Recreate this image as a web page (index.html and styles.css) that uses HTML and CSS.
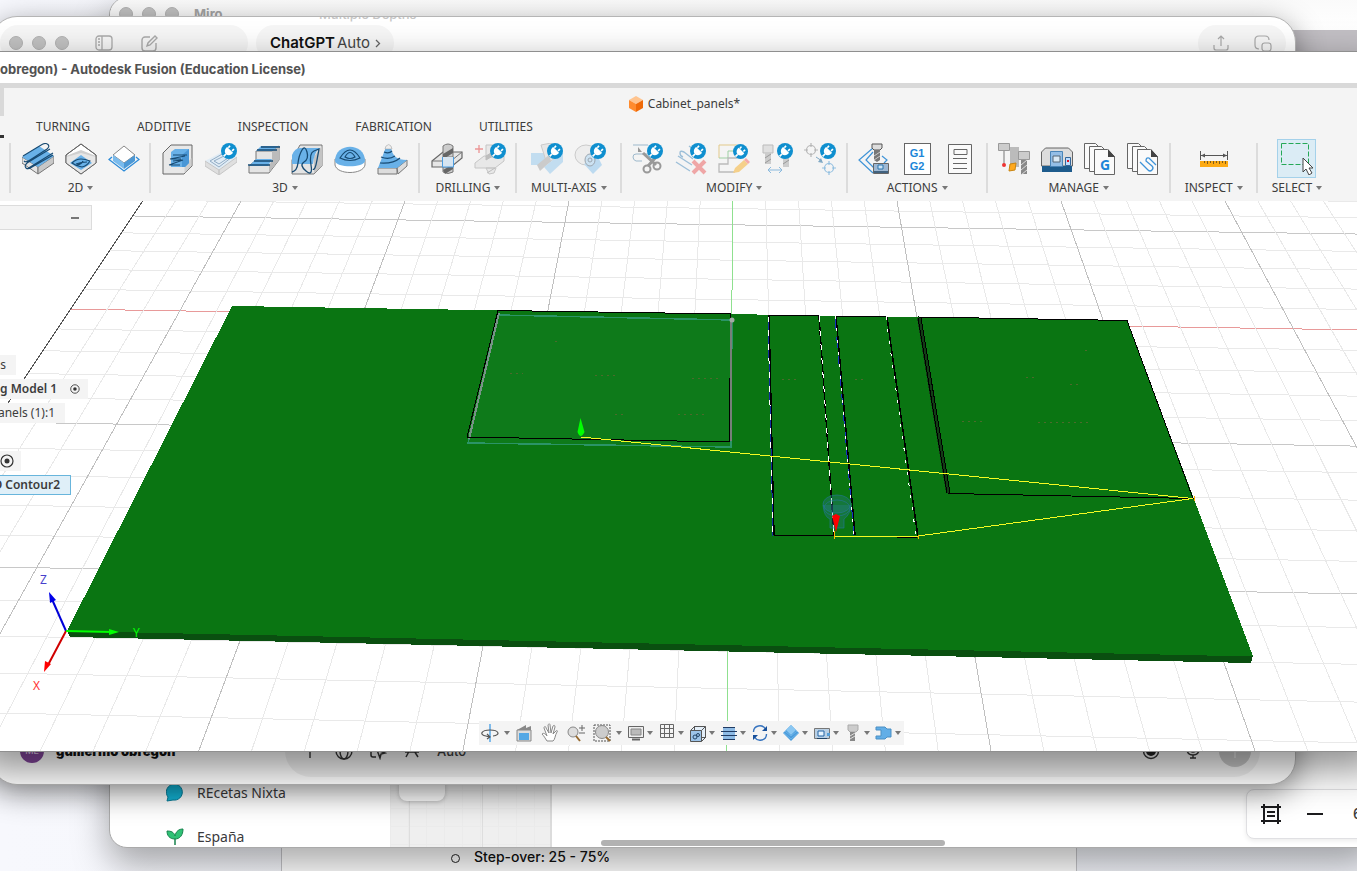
FILE: index.html
```html
<!DOCTYPE html>
<html lang="en">
<head>
<meta charset="utf-8">
<title>Autodesk Fusion</title>
<link rel="stylesheet" href="styles.css">
</head>
<body>
<svg class="defs" aria-hidden="true">
  <symbol id="plug" viewBox="0 0 16 16"><circle cx="8" cy="8" r="8" fill="#0f8fcf"/><path d="M2.600 13.400L5 11M9 2.800l-1.600 2M13 6.200l-2 1.600" stroke="#fff" stroke-width="1.700"/><path d="M6.200 4l5.800 5.800c-1.400 2.300-4.500 3.600-7 1.400C2.800 8.800 4 5.400 6.200 4z" fill="#fff"/></symbol>
  <symbol id="target" viewBox="0 0 14 14"><circle cx="7" cy="7" r="6" fill="none" stroke="#333" stroke-width="1.200"/><circle cx="7" cy="7" r="2.500" fill="#333"/></symbol>
</svg>

<main class="desktop">
  <article class="doc">
    <ul><li>Step-over: 25 - 75%</li></ul>
  </article>

  <section class="window miro" aria-label="Miro">
    <header class="miro-bar"><i class="dot"></i><i class="dot"></i><i class="dot"></i><b>Miro</b></header>
    <div class="miro-strip"></div>
    <div class="miro-body">
      <nav class="miro-side">
        <a href="#"><svg width="18" height="18" viewBox="0 0 18 18"><path d="M1 17l1-4a8 8 0 1 1 5 3z" fill="#13b6d8" stroke="#087f9b"/></svg>REcetas Nixta</a>
        <a href="#"><svg width="18" height="18" viewBox="0 0 18 18"><path d="M9 17v-7" stroke="#17824d" stroke-width="1.500"/><path d="M9 11C3 11 1 7 1 3c4 0 7 1 8 5 1-5 4-7 8-7 0 6-3 10-8 10z" fill="#2fc175" stroke="#17824d"/></svg>España</a>
      </nav>
      <div class="miro-board"><i></i></div>
      <div class="miro-page"><i class="scroll"></i></div>
    </div>
    <div class="zoom-panel">
      <button aria-label="Frames"><svg width="20" height="20" viewBox="0 0 20 20"><path d="M0 3h20M0 17h20M3 0v20M17 0v20M6 8h8M6 12h8" stroke="#1c1c1e" stroke-width="2" fill="none"/></svg></button>
      <button aria-label="Zoom out"><svg width="16" height="20" viewBox="0 0 16 20"><path d="M0 10h16" stroke="#1c1c1e" stroke-width="2"/></svg></button>
      <span>6</span>
    </div>
  </section>

  <section class="window chat" aria-label="ChatGPT">
    <p class="chat-under">Multiple Depths</p>
    <header class="chat-head">
      <div class="pill pill-left"><i class="dot"></i><i class="dot"></i><i class="dot"></i>
        <button aria-label="Sidebar"><svg width="18" height="16" viewBox="0 0 18 16" fill="none" stroke="#aaa" stroke-width="1.300"><rect x="1" y="1" width="16" height="14" rx="3"/><path d="M7 1v14M3 4h2M3 7h2M3 10h2"/></svg></button>
        <button aria-label="New chat"><svg width="18" height="17" viewBox="0 0 18 17" fill="none" stroke="#aaa" stroke-width="1.400"><path d="M9 2H4a3 3 0 0 0-3 3v8a3 3 0 0 0 3 3h8a3 3 0 0 0 3-3V8M6 11l1-3 7-7 2 2-7 7z"/></svg></button>
      </div>
      <button class="pill model"><b>ChatGPT</b><span>Auto</span><svg width="6" height="9" viewBox="0 0 6 9"><path d="M1 1l3.500 3.500L1 8" fill="none" stroke="#666" stroke-width="1.300"/></svg></button>
      <div class="pill pill-right">
        <button aria-label="Share"><svg width="16" height="16" viewBox="0 0 16 16" fill="none" stroke="#aaa" stroke-width="1.200"><path d="M8 11V1M5 4l3-3 3 3M1 10v3q0 2 2 2h10q2 0 2-2v-3"/></svg></button>
        <button aria-label="Pop out"><svg width="18" height="17" viewBox="0 0 18 17" fill="none" stroke="#aaa" stroke-width="1.200"><path d="M5 14Q1 14 1 10V5q0-4 4-4h6q4 0 4 4"/><rect x="8" y="8" width="9" height="8" rx="2.500"/></svg></button>
      </div>
    </header>
    <footer class="chat-foot">
      <div class="user"><span class="avatar">ME</span><b>guillermo obregon</b></div>
      <div class="composer">
        <button aria-label="Add"><svg width="18" height="18" viewBox="0 0 18 18"><path d="M9 2v14M2 9h14" stroke="#333" stroke-width="1.400"/></svg></button>
        <button aria-label="Web"><svg width="18" height="18" viewBox="0 0 18 18" fill="none" stroke="#333" stroke-width="1.400"><circle cx="9" cy="9" r="8"/><ellipse cx="9" cy="9" rx="4" ry="8"/><path d="M1 9h16"/></svg></button>
        <button aria-label="Agent"><svg width="18" height="18" viewBox="0 0 18 18" fill="none" stroke="#333" stroke-width="1.500"><path d="M7 15H4q-2 0-2-2V4q0-2 2-2h8q2 0 2 2v2M8 8l8 3-4 1-1 4z"/></svg></button>
        <button aria-label="Apps"><svg width="18" height="18" viewBox="0 0 18 18" fill="none" stroke="#333" stroke-width="1.500"><path d="M2 10h14M10 2L3 15M8 4l7 11"/></svg></button>
        <span>Auto</span>
        <i class="grow"></i>
        <button aria-label="Record"><svg width="18" height="18" viewBox="0 0 18 18"><circle cx="9" cy="9" r="7.500" fill="none" stroke="#333" stroke-width="1.500"/><circle cx="9" cy="9" r="5" fill="#222"/></svg></button>
        <button aria-label="Dictate"><svg width="18" height="18" viewBox="0 0 18 18" fill="none" stroke="#333" stroke-width="1.400"><rect x="6.500" y="0" width="5" height="10" rx="2.500"/><path d="M3 7q0 6 6 6t6-6M9 13v3M6 16h6"/></svg></button>
        <button class="send" aria-label="Send"><svg width="14" height="14" viewBox="0 0 14 14"><path d="M7 1v13M2 6l5-5 5 5" fill="none" stroke="#ddd" stroke-width="1.500"/></svg></button>
      </div>
    </footer>
  </section>

  <section class="fusion" aria-label="Autodesk Fusion">
    <h1 class="titlebar">obregon) - Autodesk Fusion (Education License)</h1>
    <header class="ribbon">
      <div class="doc-tab"><svg width="14" height="16" viewBox="0 0 14 16"><path d="M7 0l7 4-7 4-7-4z" fill="#ffc48f"/><path d="M0 4l7 4v8l-7-4z" fill="#ff8b2e"/><path d="M14 4L7 8v8l7-4z" fill="#f06a08"/></svg>Cabinet_panels*</div>
      <nav class="tabs"><button>TURNING</button><button>ADDITIVE</button><button>INSPECTION</button><button>FABRICATION</button><button>UTILITIES</button></nav>
      <div class="tools">
        <div class="group"><div class="icons">
          <button aria-label="2D Adaptive Clearing"><svg viewBox="0 0 32 32"><path d="M0 14l16 10v7L0 20z" fill="#e4e4e4" stroke="#777"/><path d="M32 13L16 24v7l16-11z" fill="#c8c8c8" stroke="#777"/><path d="M0 14L17 3l15 10-16 11z" fill="#69b1e8"/><path d="M1 13L20 1.500q4-2 6 0t-1 4.500L8 17q-4 3-6 1M5 20L28 6M5 26L31 10M5 20q-3 3-1 5t6-1L31 12" fill="none" stroke="#174a72" stroke-width="1.100"/></svg></button>
          <button aria-label="2D Pocket"><svg viewBox="0 0 32 32"><path d="M16 1l15 11v8L16 31 1 20v-8z" fill="#fff" stroke="#666"/><path d="M1 13l15-6 15 6v7L16 31 1 20z" fill="#cfcfcf"/><path d="M1 14l15-4 15 4v6L16 31 1 20z" fill="#e6e6e6"/><path d="M5 20l11-8 11 8-11 7z" fill="#69b1e8"/><path d="M7 20q4-4 9-4 4 0 9 2-3 5-8 6-6-1-10-4zm4 1q5-2 11-2M12 22q5-1 6-4" fill="none" stroke="#174a72" stroke-width="1.100"/><path d="M16 1l15 11v8L16 31 1 20v-8z" fill="none" stroke="#666"/></svg></button>
          <button aria-label="2D Contour"><svg viewBox="0 0 32 32"><path d="M4 14l-3 2.500L16 28l15-11.500-3-2.500" fill="none" stroke="#2d8bd8" stroke-width="1.300"/><path d="M16 3l11 9-11 8-11-8z" fill="#fff" stroke="#888"/><path d="M5 12l11 8v6L5 18z" fill="#7abbed"/><path d="M27 12l-11 8v6l11-8z" fill="#4c98d5"/></svg></button>
        </div><button class="label">2D</button></div>
        <div class="group"><div class="icons">
          <button aria-label="Adaptive"><svg viewBox="0 0 32 32"><path d="M1 10l8-8h21v21l-8 8H1z" fill="#e8e8e8" stroke="#666"/><path d="M22.500 30.500V23l7-8v8z" fill="#cfcfcf"/><path d="M9 9l4-3h14v14l-4 4H9z" fill="#69b1e8"/><path d="M20 12l7-6v14l-4 4h-3z" fill="#4a97d6"/><path d="M11 12h14M8 16l15-3M9 16h10M11 18l9-1M7 22l14-5M7 22h11" fill="none" stroke="#174a72" stroke-width="1.200"/></svg></button>
          <button aria-label="Pocket clearing"><svg viewBox="0 0 32 32"><g opacity=".5"><path d="M0 18l19-10 13 6-18 13z" fill="#cfe6f7"/><path d="M0 18l14 9v5L0 23zM14 27l18-13v5L14 32z" fill="#ccc" stroke="#999"/><path d="M5 18l14-8 8 4-13 10zM9 18l10-5 4 2-9 6z" fill="none" stroke="#369"/></g><use href="#plug" x="16" y="0" width="16" height="16"/></svg></button>
          <button aria-label="Horizontal"><svg viewBox="0 0 32 32"><path d="M8 8h16l7-5v14L21 30H1v-7l7-6z" fill="#e4e4e4" stroke="#777"/><path d="M21 29.500V23l3-6V8l7-5v14z" fill="#bbb"/><path d="M8 8l5-5h18l-7 5zM1 23l7-7h16l-4 7z" fill="#69b1e8"/><path d="M13 4h19M9 7h20M6 18h19M0 22h22" stroke="#174a72" stroke-width="1.300"/></svg></button>
          <button aria-label="Parallel"><svg viewBox="0 0 32 32"><path d="M1 17L9 2h22v21l-8 8H1z" fill="#e4e4e4" stroke="#777"/><path d="M23 30.500V14l8-11v20z" fill="#c4c4c4"/><path d="M1 21V12q3-8 10-7h18q-6 4-7 16z" fill="#69b1e8"/><path d="M1 29q5-1 6-9t4-13 5 2-3 10 2 9 5-6 3-14 5-2-2 11-4 9" fill="none" stroke="#174a72" stroke-width="1.300"/></svg></button>
          <button aria-label="Scallop"><svg viewBox="0 0 32 32"><path d="M1 16v6c2 10 28 10 30 0v-6z" fill="#fff" stroke="#888"/><path d="M1 18C1-1 31-1 31 18c-1 7-29 7-30 0z" fill="#69b1e8"/><path d="M6 15q10-16 20 0-10 5-20 0zm5-1q5-9 10 0-5 3-10 0z" fill="none" stroke="#174a72" stroke-width="1.200"/></svg></button>
          <button aria-label="Steep and shallow"><svg viewBox="0 0 32 32"><path d="M1 25h19v6H1zM20 25l10-8v6l-9 8z" fill="#ddd" stroke="#777"/><path d="M1 25l8-21h5c1 9 6 13 16 13l-10 8z" fill="#69b1e8"/><path d="M9 3q3-3 5 0l1 3H8z" fill="#eee" stroke="#999" stroke-width=".5"/><path d="M7 9q5 2 8-1M4 14q8 3 14-1M3 20q13 1 20-5" fill="none" stroke="#174a72" stroke-width="1.200"/></svg></button>
        </div><button class="label">3D</button></div>
        <div class="group"><div class="icons">
          <button aria-label="Drill"><svg viewBox="0 0 32 32"><path d="M1 18l11-9h19v6L20 24H1z" fill="#e6e6e6" stroke="#666" stroke-width="1.200"/><path d="M1 18h19l11-9" fill="none" stroke="#777"/><path d="M12 3q5-4 10 0v11H12zM12 24h10v5q-5 3-10 0z" fill="#ccc" stroke="#777"/><path d="M12 11l10-6v5l-8 5h-2zM12 27l7-4h3v3l-8 5z" fill="#666"/><path d="M11.500 14v10h11V14" fill="#d7e5f1" stroke="#4c9de0"/></svg></button>
          <button aria-label="Hole recognition"><svg viewBox="0 0 32 32"><g opacity=".5"><path d="M1 20l9-7h20v5l-9 7H1zM12 2h10v12H12zM12 25h10l-2 5-5 1z" fill="#ddd" stroke="#999"/><path d="M12 13l10-6v4l-10 6zM13 30l8-5" stroke="#888" fill="#888"/></g><path d="M1 6h8M5 2v8" stroke="#ec9595" stroke-width="1.300"/><use href="#plug" x="16" y="0" width="16" height="16"/></svg></button>
        </div><button class="label">DRILLING</button></div>
        <div class="group"><div class="icons">
          <button aria-label="Swarf"><svg viewBox="0 0 32 32"><g opacity=".55"><path d="M0 10h15l-2 12H0z" fill="#9bcbee"/><path d="M10 2l10-2 7 13-11 8z" fill="#ddd" stroke="#aaa"/><path d="M32 9v10L19 31l-6-7z" fill="#9bcbee"/><path d="M6 22l12-10 2 6L9 28z" fill="#aaa"/></g><use href="#plug" x="16" y="0" width="16" height="16"/></svg></button>
          <button aria-label="Multi-axis contour"><svg viewBox="0 0 32 32"><g opacity=".55"><ellipse cx="12" cy="12" rx="11" ry="10" fill="#e8e8e8" stroke="#aaa"/><path d="M10 21l14-7 4 8-9 9z" fill="#8fc5ee"/><ellipse cx="16" cy="17" rx="5" ry="6" fill="#acd5f1" stroke="#567"/><circle cx="16" cy="17" r="2" fill="none" stroke="#567"/></g><use href="#plug" x="16" y="0" width="16" height="16"/></svg></button>
        </div><button class="label">MULTI-AXIS</button></div>
        <div class="group"><div class="icons">
          <button aria-label="Trim"><svg viewBox="0 0 32 32"><path d="M1 2h15M16 11H4q-3 0-3 3t3 4h6" fill="none" stroke="#9db9cc"/><path d="M6 4v5h4z" fill="#999"/><path d="M11 10l13 12M25 13l-9 10" stroke="#999" stroke-width="3"/><circle cx="15" cy="26" r="3.500" fill="none" stroke="#999" stroke-width="2"/><circle cx="25" cy="23" r="3.500" fill="none" stroke="#999" stroke-width="2"/><use href="#plug" x="15" y="0" width="16" height="16"/></svg></button>
          <button aria-label="Delete passes"><svg viewBox="0 0 32 32"><path d="M1 19l14 9M3 13l14 9M18 16L9 9q-4-2-4 1t3 4M14 3l10 7" fill="none" stroke="#9dbfd8" stroke-width="1.400"/><path d="M18 18l12 12M30 18L18 30" stroke="#efa6a6" stroke-width="4"/><use href="#plug" x="15" y="0" width="16" height="16"/></svg></button>
          <button aria-label="Edit passes"><svg viewBox="0 0 32 32"><path d="M1 15V2h18" fill="none" stroke="#e2c98a"/><path d="M1 15h9V8h9" fill="none" stroke="#9ed0a3"/><path d="M19 15h-9v6H1v8h16" fill="none" stroke="#bbb" stroke-width="1.300"/><path d="M15 30l2-5 9-8 4 4-9 8z" fill="#f5d08a"/><path d="M26 17l2-2 4 4-2 2z" fill="#f5aaaa"/><use href="#plug" x="15" y="1" width="15" height="15"/></svg></button>
          <button aria-label="Move tool"><svg viewBox="0 0 32 32"><path d="M2 2h10v8H2z" fill="#e0e0e0" stroke="#bbb"/><path d="M4 10h6v11H4zM22 14h6v10h-6z" fill="#ccc"/><path d="M4 15l6-4M4 20l6-4M22 21l6-4" stroke="#999"/><path d="M7 27h14M10 24l-3 3 3 3M18 24l3 3-3 3" fill="none" stroke="#8ab9dd"/><use href="#plug" x="16" y="0" width="16" height="16"/></svg></button>
          <button aria-label="Points"><svg viewBox="0 0 32 32"><g fill="none" stroke="#b5b5b5" stroke-width="1.200"><circle cx="7" cy="7" r="4.500"/><path d="M7 0v4M7 10v4M0 7h4M10 7h4"/></g><g fill="none" stroke="#92bfe0" stroke-width="1.200"><circle cx="25" cy="25" r="4.500"/><path d="M25 18v4M25 28v4M18 25h4M28 25h4"/></g><path d="M12 14l6 4" stroke="#7fa8c4"/><path d="M19 20l-5-1 3-4z" fill="#7fa8c4"/><use href="#plug" x="16" y="0" width="16" height="16"/></svg></button>
        </div><button class="label">MODIFY</button></div>
        <div class="group"><div class="icons">
          <button aria-label="Simulate"><svg viewBox="0 0 32 32"><path d="M15 5L1 17l14 13M15 9l-7 8 8 8M24 13l5 4-3 3" fill="none" stroke="#3e93d7" stroke-width="1.200"/><path d="M14 1h10v4l-2 2h-6l-2-2z" fill="#ddd" stroke="#555"/><path d="M16 7h6v10l-3 2-3-2z" fill="#777"/><path d="M16 13l6-4M16 17l6-4" stroke="#ccc"/><path d="M15.500 20.500h15v10h-15z" fill="#9eb8d3" stroke="#666"/><path d="M16 28h14v2H16z" fill="#41627f"/><path d="M20 22h5v4h-5z" fill="#cde5f7" stroke="#2874ad"/></svg></button>
          <button aria-label="Post process"><svg viewBox="0 0 32 32"><rect x="3.500" y=".5" width="26" height="31" fill="#fff" stroke="#666"/><g fill="#1c86d8" font-family="Liberation Sans, sans-serif" font-size="11" font-weight="700" text-anchor="middle"><text x="16" y="14">G1</text><text x="16" y="27">G2</text></g></svg></button>
          <button aria-label="Setup sheet"><svg viewBox="0 0 32 32"><path d="M4.500 1.500h23v29h-23zM10 6.500h13v5H10zM9 15.500h14M9 20.500h14M9 25.500h14" fill="#fafafa" stroke="#666"/></svg></button>
        </div><button class="label">ACTIONS</button></div>
        <div class="group"><div class="icons">
          <button aria-label="Tool library"><svg viewBox="0 0 32 32"><path d="M12 4h9v20h-9z" fill="#bbb"/><path d="M.5.500h11v7H.5zM20.500 8.500h11v8h-11z" fill="#ccc" stroke="#999"/><path d="M6 8v13" stroke="#777"/><circle cx="6" cy="22" r="2" fill="#e33"/><path d="M12 21l6-1-1 7-6 1z" fill="#ffa91f" stroke="#c98511"/><path d="M23 17h6v14h-6z" fill="#888"/><path d="M23 22l6-5M23 27l6-5M23 32l6-5" stroke="#ddd"/></svg></button>
          <button aria-label="Machine library"><svg viewBox="0 0 32 32"><path d="M.5 23V9l4-4h23l4 4v14z" fill="#ddd" stroke="#666"/><path d="M1 23h30v6H1z" fill="#1d5b8c"/><path d="M9.500 8.500h12v15h-12z" fill="#94bee6" stroke="#4a85b8"/><path d="M12 13h7v6h-7z" fill="#d9e9f5" stroke="#567"/><path d="M24.500 14.500h5v8h-5z" fill="#bcdcff" stroke="#369"/><path d="M26 17h2v2h-2z" fill="#d12"/></svg></button>
          <button aria-label="Post library"><svg viewBox="0 0 32 32"><g fill="#fafafa" stroke="#666"><path d="M.5.500h11l5 5v20H.5z"/><path d="M5.500 3.500h12l5 5v20h-17z"/><path d="M10.500 6.500h13l7 7v18h-20z"/></g><path d="M24 6v8h7z" fill="#444"/><text x="21" y="27" fill="#1c86d8" font-family="Noto Sans, sans-serif" font-size="14" font-weight="700" text-anchor="middle">G</text></svg></button>
          <button aria-label="Template library"><svg viewBox="0 0 32 32"><g fill="#fafafa" stroke="#666"><path d="M.5.500h11l5 5v20H.5z"/><path d="M5.500 3.500h12l5 5v20h-17z"/><path d="M10.500 6.500h13l7 7v18h-20z"/></g><path d="M24 6v8h7z" fill="#444"/><path d="M13 19l8 8q2 2 4 0t0-4l-6-5q0-4 3-3l7 7" fill="none" stroke="#3f93d8" stroke-width="1.300"/></svg></button>
        </div><button class="label">MANAGE</button></div>
        <div class="group"><div class="icons">
          <button aria-label="Measure"><svg viewBox="0 0 32 32"><path d="M2.500 8v9M29.500 8v9M3 12.500h26" stroke="#555"/><path d="M3 12.500l4-2v4zM29 12.500l-4-2v4z" fill="#555"/><path d="M2 18h28v6H2z" fill="#fdaa13"/><path d="M6.500 18v2M9.500 18v3M12.500 18v2M15.500 18v3M18.500 18v2M21.500 18v3M24.500 18v2M27.500 18v3" stroke="#7b5a1a"/></svg></button>
        </div><button class="label">INSPECT</button></div>
        <div class="group"><div class="icons">
          <button class="active" aria-label="Select"><svg viewBox="0 0 32 32"><path d="M.5.500h27v21H.5z" fill="none" stroke="#26a857" stroke-dasharray="5 2"/><path d="M22 15v14l3-3 3 6 3-2-3-5h4z" fill="#fff" stroke="#444"/></svg></button>
        </div><button class="label">SELECT</button></div>
      </div>
    </header>

    <div class="canvas">
      <svg class="scene" viewBox="0 201 1357 550" preserveAspectRatio="xMinYMin slice" role="img" aria-label="Stock model with contour toolpaths">
        <g id="grid" shape-rendering="crispEdges"></g>
        <g shape-rendering="crispEdges">
          <path d="M67 631L1253 655l-2 8L70 637z" fill="#0a4f10"/>
          <path d="M232 306L1127 320.500 1253 656.500 67 631z" fill="#0a7512"/>
          <path d="M498 315l234 5-1 127-263-4z" fill="#0e7a1a" stroke="#2b9467" stroke-width="1.500"/>
          <path d="M499 313L469 439" stroke="#779387" stroke-width="2"/>
          <path d="M731 314L498 310.500 467 437 729 442z" fill="none" stroke="#000"/>
          <path d="M731 322v119" stroke="#777f7a" stroke-width="2"/>
          <g fill="none" stroke="#000"><path d="M769 315l50 1M836 316l50 1M919 317l208 3.500 66 178-244-5z"/><path stroke-width="1.500" d="M769 315l5 220M819 316l15 219M836 316l19 219M887 317l31 220"/><path d="M774 535.500h60M855 536l62 1.500"/></g>
          <path d="M919 318l29 175" stroke="#123c15" stroke-width="4"/><path d="M918 318l29 175M921 318l29 175" stroke="#000"/>
          <path d="M768 316l5 220" stroke="#12309f"/>
          <path d="M768 316l5 220M819 316l15 219" stroke="#fff" stroke-dasharray="6 8"/>
          <path d="M835 318l19 217" stroke="#1237c0" stroke-dasharray="11 8"/>
          <path d="M835 316l19 219M886 317l30 219" stroke="#fff" stroke-dasharray="3 9"/>
          <path d="M555 341h5M510 373h13M595 375h22M692 378h28M782 379h15M855 379h10M615 414h12M678 414h26M962 421h22M1038 422h50M1070 384h8M1026 377h12M1085 350h6" stroke="#4c6a2b" stroke-dasharray="2 4"/>
          <path d="M581 437l612 61.500L918 536H834" fill="none" stroke="#f4fb22"/>
          <path d="M834 531v8M1194 496v5M918 535v4" stroke="#ffb300"/>
        </g>
        <g fill="#2d7f9a" fill-opacity=".3" stroke="#257499" stroke-opacity=".6"><ellipse cx="837" cy="504" rx="14" ry="9"/><path d="M823 505q1 12 7 14v9h14v-9q6-4 7-14"/><ellipse cx="837" cy="508" rx="13" ry="8" fill="none"/></g>
        <path d="M832 516l4-2 4 2-4 16z" fill="#f00"/>
        <path d="M580.500 418l4 14q-4 8-7 0z" fill="#0f0"/>
        <circle cx="732" cy="320" r="2.500" fill="#a3aba5"/>
        <path d="M66 631L51 597" stroke="#0000d8" stroke-width="2"/><path d="M49 592l7 8-6 3z" fill="#0000e8"/>
        <path d="M66 631L48 665" stroke="#d00000" stroke-width="2"/><path d="M44 672l1-11 6 3z" fill="#f00"/>
        <path d="M66 631l46 1" stroke="#0f0" stroke-width="2"/><path d="M119 632l-10-3v6z" fill="#0f0"/>
        <g font-family="Noto Sans, sans-serif" font-size="12"><text x="40" y="584" fill="#4740cc">Z</text><text x="33" y="690" fill="#f33">X</text><text x="133" y="637" fill="#0f0">Y</text></g>
      </svg>

      <div class="browser-head"><button aria-label="Collapse"></button></div>
      <ul class="browser">
        <li class="w16">s</li>
        <li class="w88 bold">g Model 1<svg width="14" height="14"><use href="#target"/></svg></li>
        <li class="w65">anels (1):1</li>
        <li class="blank"></li>
        <li class="w21"><svg width="14" height="14"><use href="#target"/></svg></li>
        <li class="w71 bold selected">D Contour2</li>
      </ul>

      <nav class="navbar">
        <button class="wide" aria-label="Orbit"><svg viewBox="0 0 20 20"><path d="M10 1v18" stroke="#58a8e8" stroke-width="1.500"/><path d="M13 13c8-1 6-6-3-6s-11 5-4 6l3 1M7 11l3 3-3 2" fill="none" stroke="#555" stroke-width="1.200"/></svg></button>
        <button class="single" aria-label="Look at"><svg viewBox="0 0 20 20"><path d="M3 7h14v11H3z" fill="#ddd" stroke="#888"/><path d="M5 10h10v7H5z" fill="#54a8e5"/><path d="M3 7l9-5v3l5-2v4z" fill="#888"/></svg></button>
        <button class="single" aria-label="Pan"><svg viewBox="0 0 20 20"><path d="M7 18c-2-3-3-5-5-7 2-2 4 1 5 2L4 5c0-2 2-2 2 0l3 5-1-8c1-2 2-1 2 0l1 8 2-7c1-1 2-1 2 1l-2 7 3-3c1-1 2 0 1 1-2 3-2 8-4 9z" fill="#fff" stroke="#888"/></svg></button>
        <button class="single" aria-label="Zoom"><svg viewBox="0 0 20 20"><circle cx="7" cy="9" r="5" fill="#ddd" stroke="#888"/><path d="M10 13l4 5" stroke="#966a30" stroke-width="2"/><path d="M13 5h6M16 2v6M13 10h6" stroke="#666"/></svg></button>
        <button class="wide" aria-label="Fit"><svg viewBox="0 0 20 20"><path d="M2 2h16v16H2z" fill="none" stroke="#555" stroke-dasharray="2 1"/><circle cx="10" cy="9" r="6.500" fill="#ccc" stroke="#888"/><path d="M14 14l4 4" stroke="#966a30" stroke-width="2"/></svg></button>
        <button aria-label="Display"><svg viewBox="0 0 20 20"><path d="M2.500 3.500h15v11h-15z" fill="#eee" stroke="#666"/><path d="M5 6h10v6H5z" fill="#bbb" stroke="#888"/><path d="M6 16.500h8" stroke="#666" stroke-width="2"/></svg></button>
        <button aria-label="Grid"><svg viewBox="0 0 20 20"><path d="M3.500 1.500h13v13h-13zM7.500 2v13M12.500 2v13M3 5.500h13M3 10.500h13" fill="none" stroke="#666"/></svg></button>
        <button aria-label="Viewports"><svg viewBox="0 0 20 20"><path d="M2.500 7.500l4-4h11v11l-4 4h-11zM2.500 7.500h11v11M13.500 7.500l4-4M6.500 3v4M14 14.500h4" fill="#e3eef8" stroke="#555"/><path d="M3 8h10v10H3z" fill="#9cc3e8"/><circle cx="7" cy="14" r="2" fill="none" stroke="#246"/><circle cx="10" cy="12" r="1.500" fill="none" stroke="#246"/></svg></button>
        <button aria-label="Toolpath display"><svg viewBox="0 0 20 20"><path d="M4 4h12v13H4z" fill="#8ebbe5"/><path d="M4 4.500h12M2 8.500h16M2 12.500h16M4 16.500h12" stroke="#203b63"/></svg></button>
        <button aria-label="Refresh"><svg viewBox="0 0 20 20"><path d="M3.500 9c0-7 9-8 12-3M16.500 11c0 7-9 8-12 3" fill="none" stroke="#3774bf" stroke-width="1.400"/><path d="M17 3v5h-5zM3 17v-5h5z" fill="#174f9a"/></svg></button>
        <button aria-label="Stock"><svg viewBox="0 0 20 20"><path d="M10 2l8 8-8 8-8-8z" fill="#4b9cdc"/><path d="M10 2l5 5-5 5-5-5z" fill="#8bc7f2"/><path d="M3 10l7 6 7-6M4 8l6 5 6-5" fill="none" stroke="#6db4e8"/></svg></button>
        <button aria-label="Machine"><svg viewBox="0 0 20 20"><path d="M2.500 5.500h15v10h-15z" fill="#b9d0e5" stroke="#777"/><path d="M6 8h6v5H6z" fill="#e6f4ff" stroke="#2465a5"/><path d="M15 10h3v3h-3z" fill="#579fd8"/><path d="M5 15.500h10" stroke="#246"/></svg></button>
        <button aria-label="Tool"><svg viewBox="0 0 20 20"><path d="M5 2h10v5l-2 2H7L5 7z" fill="#ccc" stroke="#aaa"/><path d="M7 9h5v9H7z" fill="#888"/><path d="M7 13l5-3M7 16l5-3" stroke="#ddd"/></svg></button>
        <button aria-label="Holder"><svg viewBox="0 0 20 20"><path d="M2 4h9l2 2h4v8h-4l-2 2H2v-3h5V7H2z" fill="#62aee7" stroke="#4a8fc4"/></svg></button>
      </nav>
    </div>
  </section>
</main>
<script src="grid.js"></script>
</body>
</html>
```
FILE: styles.css
```css
* { box-sizing: border-box; }
body { margin: 0; font-family: "Noto Sans", sans-serif; font-size: 12px; color: #3c3c3c; }
button { border: 0; padding: 0; margin: 0; background: none; font: inherit; color: inherit; display: flex; align-items: center; justify-content: center; }
ul { list-style: none; margin: 0; padding: 0; }
.defs { position: absolute; width: 0; height: 0; }
.desktop { position: relative; height: 100vh; overflow: hidden; background: linear-gradient(90deg, #f7f8fd, #f0f2f8); }
.window { position: absolute; overflow: hidden; }
.dot { width: 14px; height: 14px; border-radius: 50%; background: #c2c2c2; border: 1px solid #b3b3b3; }
.grow { flex: 1; }

/* Document behind everything */
.doc { position: absolute; left: 281px; right: 280px; top: 20px; bottom: 0; background: #fff; border: 1px solid #c4c4c8; border-width: 0 1px; display: flex; align-items: flex-end; padding: 0 0 4px 192px; }
.doc li { position: relative; font: 500 14px/20px Inter, sans-serif; color: #111; white-space: nowrap; }
.doc li::before { content: ""; position: absolute; left: -23px; top: 7px; width: 7px; height: 7px; border: 1px solid #222; border-radius: 50%; }

/* Miro */
.miro { left: 109px; right: -20px; top: -3px; bottom: 23px; border: 1px solid #aaa; border-radius: 18px; background: #fff; box-shadow: 0 16px 36px rgba(0, 0, 0, .34); display: flex; flex-direction: column; }
.miro-bar { height: 32px; display: flex; align-items: center; gap: 9px; padding-left: 9px; background: linear-gradient(#fafafa, #fff); }
.miro-bar b { font: 700 13px/16px Inter, sans-serif; color: #a5a5a5; margin-left: 6px; }
.miro-strip { height: 40px; background: #c2bfc4; }
.miro-body { flex: 1; display: flex; min-height: 0; }
.miro-side { width: 280px; display: flex; flex-direction: column; justify-content: flex-end; gap: 24px; padding-left: 56px; }
.miro-side a { display: flex; align-items: center; gap: 13px; font-size: 14px; line-height: 20px; color: #3a3a3c; text-decoration: none; }
.miro-board { width: 162px; border-right: 2px solid #dcdcdc; background-color: #efefef; background-image: linear-gradient(90deg, #dedede 1px, transparent 1px), linear-gradient(#ebebeb 1px, transparent 1px), linear-gradient(90deg, #ebebeb 1px, transparent 1px); background-size: 73px 100%, 18px 18px, 18px 18px; background-position: 19px 0, 0 0, 0 0; display: flex; align-items: flex-end; padding: 0 0 46px 9px; }
.miro-board i { width: 46px; height: 44px; border-radius: 8px; background: #fff; box-shadow: 0 1px 4px rgba(0, 0, 0, .2); }
.miro-page { flex: 1; display: flex; align-items: flex-end; padding: 0 0 1px 49px; }
.scroll { width: 344px; height: 6px; border-radius: 3px; background: #b2b2b2; }
.zoom-panel { position: absolute; right: -20px; bottom: 8px; width: 150px; height: 50px; display: flex; align-items: center; gap: 26px; padding-left: 14px; border: 1px solid #e0e0e3; border-radius: 8px; background: #fff; box-shadow: 0 2px 5px rgba(0, 0, 0, .08); font: 500 14px/20px Inter, sans-serif; }
.zoom-panel span { margin-left: 4px; }

/* ChatGPT */
.chat { left: -9px; right: 61px; top: 16px; bottom: 86px; border: 1px solid #b5b5b5; border-radius: 26px; background: #fff; box-shadow: 0 8px 30px rgba(0, 0, 0, .42); display: flex; flex-direction: column; justify-content: space-between; }
.chat-under { position: absolute; left: 327px; top: -11px; margin: 0; font: 500 13px/16px Inter, sans-serif; color: #c5c5c5; }
.chat-head { display: flex; gap: 8px; padding: 8px 9px 0 8px; }
.pill { height: 36px; border-radius: 18px; background: #f6f6f6; display: flex; align-items: center; }
.pill-left { width: 248px; padding-left: 9px; gap: 9px; }
.pill-left button:first-of-type { margin-left: 17px; }
.pill-left button:last-of-type { margin-left: 19px; }
.model { padding: 0 13px 0 14px; gap: 2px; font: 400 15px/20px Inter, sans-serif; color: #444; }
.model b { font-weight: 600; color: #111; }
.model svg { margin-left: 3px; }
.pill-right { margin-left: auto; width: 88px; padding-left: 15px; gap: 25px; }
.chat-foot { display: flex; align-items: center; padding: 0 35px 7px 28px; }
.user { width: 265px; padding-top: 4px; display: flex; align-items: center; gap: 12px; font: 600 13px/16px Inter, sans-serif; color: #111; }
.avatar { width: 24px; height: 24px; border-radius: 50%; background: #81459a; color: #e3cfec; font-size: 9px; font-weight: 500; display: flex; align-items: center; justify-content: center; }
.composer { flex: 1; height: 56px; border-radius: 26px; background: #f1f1f1; display: flex; align-items: center; gap: 16px; padding: 3px 9px 0 16px; font: 500 13px/16px Inter, sans-serif; }
.composer .send { width: 32px; height: 32px; border-radius: 50%; background: #c4c4c4; }
.composer button:nth-last-of-type(2) { margin: 0 1px 0 8px; }

/* Fusion */
.fusion { position: absolute; left: -20px; right: -20px; top: 51px; bottom: 119px; padding: 0 20px; background: #fff; border: 1px solid #8f8f8f; border-width: 1px 0; box-shadow: 0 16px 36px 2px rgba(0, 0, 0, .44); display: flex; flex-direction: column; }
.titlebar { margin: 0; height: 31px; font: 700 13px/34px Inter, sans-serif; color: #525252; white-space: nowrap; }
.ribbon { border-top: 5px solid #d9d9d9; background: #f4f4f4; position: relative; }
.ribbon::before { content: ""; position: absolute; left: 0; top: 0; width: 4px; height: 28px; background: #d9d9d9; }
.ribbon::after { content: ""; position: absolute; left: 0; top: 47px; width: 4px; height: 3px; background: #333; }
.doc-tab { height: 30px; display: flex; align-items: center; justify-content: center; gap: 5px; padding: 2px 0 0 12px; line-height: 16px; }
.tabs { display: flex; gap: 47px; padding-left: 36px; height: 18px; line-height: 16px; }
.tools { display: flex; height: 65px; padding: 3px 0 0 9px; }
.group { display: flex; flex-direction: column; align-items: center; padding: 0 4px 0 5px; position: relative; border-left: 2px solid transparent; }
.group::before { content: ""; position: absolute; left: -2px; top: 4px; height: 50px; width: 2px; background: #dcdcdc; }
.icons { display: flex; }
.icons button { width: 43px; height: 39px; }
.icons svg { width: 32px; height: 32px; }
.icons .active { width: 39px; background: #dbecf5; border: 1px solid #a4d1ea; }
.label { padding: 0 9px; gap: 4px; line-height: 16px; margin-top: 2px; white-space: nowrap; }
.label::after, .navbar .wide::after, .navbar button:not(.single)::after { content: ""; border: 3px solid transparent; border-top: 4px solid #777; border-bottom: 0; }

.canvas { flex: 1; min-height: 0; position: relative; overflow: hidden; background: #fff; }
.scene { display: block; width: 100%; height: 100%; }
.browser-head { position: absolute; left: 0; top: 4px; width: 92px; height: 25px; background: #f4f4f4; border: 1px solid #dcdcdc; border-left: 0; display: flex; align-items: center; justify-content: flex-end; padding-right: 12px; }
.browser-head button { width: 8px; height: 2px; background: #777; }
.browser { position: absolute; left: 0; top: 154px; display: flex; flex-direction: column; gap: 4px; }
.browser li { height: 20px; background: #f4f4f4; display: flex; align-items: center; justify-content: flex-end; gap: 13px; padding-right: 10px; white-space: nowrap; line-height: 16px; }
.browser .w16 { width: 16px; }
.browser .w88 { width: 88px; padding-right: 8px; }
.browser .w65 { width: 65px; }
.browser .w21 { width: 21px; padding-right: 7px; }
.browser .w71 { width: 71px; }
.browser .blank { visibility: hidden; }
.browser .bold { font-weight: 600; }
.browser .selected { background: #dfeff8; border: 1px solid #68b5dc; border-left: 0; }
.navbar { position: absolute; left: 479px; bottom: 6px; height: 24px; display: flex; background: #f4f4f4; }
.navbar button { width: 31px; justify-content: flex-start; padding-left: 1px; gap: 1px; }
.navbar button.wide { width: 34px; gap: 4px; }
.navbar button.single { width: 26px; }
.navbar svg { width: 20px; height: 20px; flex: none; }
```
FILE: grid.js
```js
// Ground plane grid in one-point perspective.
(function () {
  const grid = document.getElementById('grid');
  const vanish = { x: 743, y: -700 };

  function line(x1, y1, x2, y2, color) {
    const el = document.createElementNS('http://www.w3.org/2000/svg', 'line');
    el.setAttribute('x1', x1);
    el.setAttribute('y1', y1);
    el.setAttribute('x2', x2);
    el.setAttribute('y2', y2);
    el.setAttribute('stroke', color);
    grid.appendChild(el);
  }

  const rows = [182, 198, 214, 231, 249, 268, 288, 308, 328, 350, 373, 397, 422, 448, 475, 505, 535, 567, 600, 636, 673, 713, 754];
  rows.forEach((y, i) => {
    const slope = 0.0148 + (y - 216) * 0.0000145;
    const start = Math.max(0, 142 - 0.667 * (y - 201));
    const color = i === 7 ? '#e89a9a' : (i - 2) % 5 === 0 ? '#c8c8c8' : '#e9e9e9';
    line(start, y + slope * start, 1500, y + slope * 1500, color);
  });

  for (let k = -18; k <= 26; k++) {
    const x = 733 + 32.8 * k;
    const x2 = vanish.x + (x - vanish.x) * (751 - vanish.y) / (201 - vanish.y);
    const color = k === 0 ? '#8fe08f' : k === -18 ? '#555' : k % 5 === 0 ? '#c0c0c0' : '#e9e9e9';
    line(x, 201, x2, 751, color);
  }
})();
```
